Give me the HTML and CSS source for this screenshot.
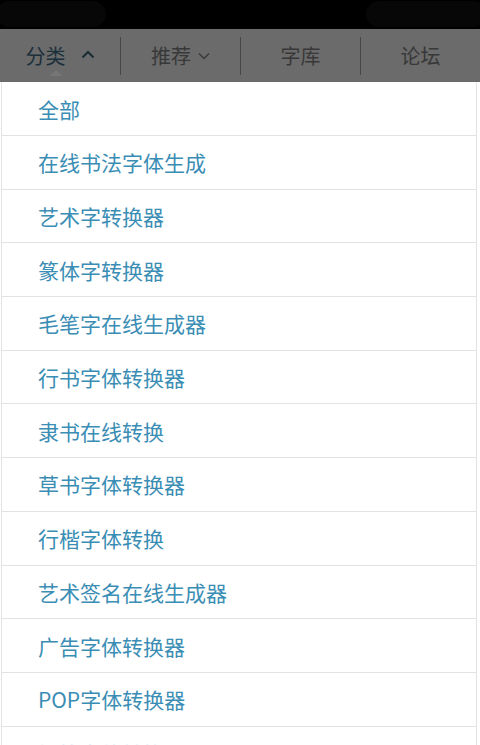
FILE: index.html
```html
<!DOCTYPE html>
<html lang="zh-CN">
<head>
<meta charset="utf-8">
<link rel="stylesheet" href="styles.css">
</head>
<body>
<div class="statusbar">
  <div class="pill pill-left"></div>
  <div class="pill pill-right"></div>
</div>
<nav class="nav">
  <div class="tab active">
    <span>分类</span>
    <svg class="chev up" width="14" height="9" viewBox="0 0 14 9"><path d="M1.5 7.5 L7 2 L12.5 7.5" fill="none" stroke="#1c2c36" stroke-width="2"/></svg>
    <span class="pointer"></span>
  </div>
  <div class="tab">
    <span>推荐</span>
    <svg class="chev down" width="12" height="8" viewBox="0 0 12 8"><path d="M1 1.5 L6 6.5 L11 1.5" fill="none" stroke="#3a3a3a" stroke-width="1.4"/></svg>
  </div>
  <div class="tab"><span>字库</span></div>
  <div class="tab"><span>论坛</span></div>
</nav>
<ul class="menu">
  <li class="first">全部</li>
  <li>在线书法字体生成</li>
  <li>艺术字转换器</li>
  <li>篆体字转换器</li>
  <li>毛笔字在线生成器</li>
  <li>行书字体转换器</li>
  <li>隶书在线转换</li>
  <li>草书字体转换器</li>
  <li>行楷字体转换</li>
  <li>艺术签名在线生成器</li>
  <li>广告字体转换器</li>
  <li>POP字体转换器</li>
  <li class="faded">钢笔字体转换器</li>
</ul>
</body>
</html>
```
FILE: styles.css
```css
html, body {
  margin: 0;
  padding: 0;
  background: #ffffff;
  width: 480px;
  height: 745px;
  overflow: hidden;
  font-family: "Noto Sans CJK SC", "Noto Sans", sans-serif;
}

.statusbar {
  height: 29px;
  background: #000;
  display: flex;
  justify-content: space-between;
  align-items: flex-start;
}

.pill {
  height: 26px;
  margin-top: 1px;
  background: #070707;
  border-radius: 13px;
}
.pill-left { width: 110px; margin-left: -4px; }
.pill-right { width: 120px; margin-right: -6px; }

.nav {
  height: 53px;
  background: #6b6b6b;
  display: grid;
  grid-template-columns: 120px 120px 120px 120px;
  align-items: center;
}

.tab {
  position: relative;
  height: 38px;
  display: flex;
  align-items: center;
  justify-content: center;
  font-size: 20px;
  color: #383838;
  border-left: 1px solid #454545;
  box-sizing: border-box;
}
.tab:first-child { border-left: none; }
.tab span { line-height: 1; }

.tab.active { color: #1b2f3b; }
.chev.up { margin-left: 15px; margin-top: -2px; }
.chev.down { margin-left: 7px; margin-top: 1px; }

.pointer {
  position: absolute;
  left: 49px;
  top: 33px;
  width: 0;
  height: 0;
  border-left: 7px solid transparent;
  border-right: 7px solid transparent;
  border-bottom: 6px solid #767676;
}

.menu {
  list-style: none;
  margin: 0 3px 0 1px;
  padding: 0;
  border-left: 1px solid #e4e4e4;
  border-right: 1px solid #e4e4e4;
  background: #fff;
}

.menu li {
  height: 53.7px;
  box-sizing: border-box;
  border-bottom: 1px solid #e2e2e2;
  padding-left: 36px;
  display: flex;
  align-items: center;
  font-size: 21px;
  color: #3a8db4;
}
.menu li.first { height: 54px; }
.menu li.faded { color: #d4e6ee; }
```
